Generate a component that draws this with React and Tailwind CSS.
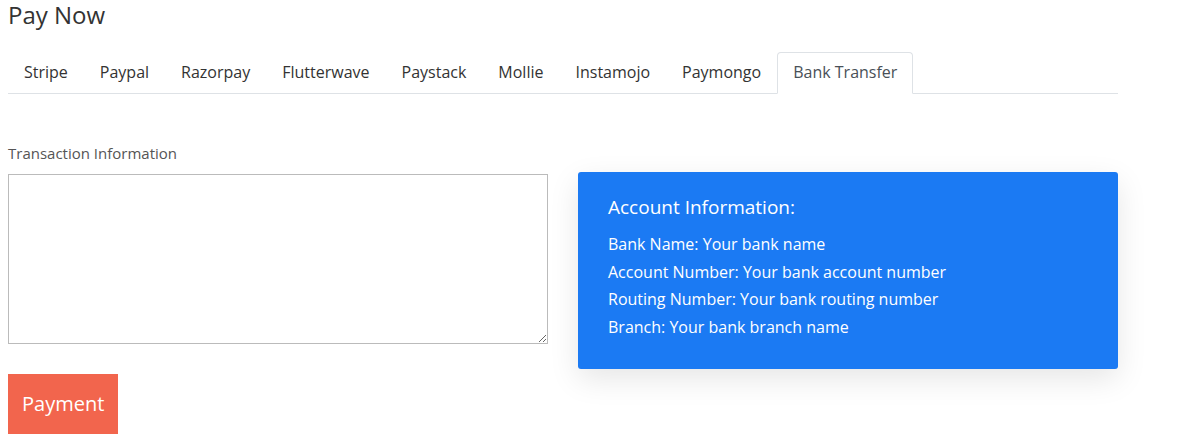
const tabs = ['Stripe', 'Paypal', 'Razorpay', 'Flutterwave', 'Paystack', 'Mollie', 'Instamojo', 'Paymongo', 'Bank Transfer']

export default function App() {
  const active = 'Bank Transfer'
  return (
    <div className="min-h-[444px] bg-white text-[#333]" style={{ fontFamily: "'Open Sans', 'Noto Sans', sans-serif" }}>
      <div className="w-[1110px] ml-[8px]">
        {/* Title */}
        <h2 className="text-[24px] leading-[28px] text-[#333] pt-[1px]">Pay Now</h2>

        {/* Tabs */}
        <ul className="flex mt-[23px] border-b border-[#dee2e6]">
          {tabs.map((t) => (
            <li key={t} className="-mb-px">
              <span
                className={`block px-[15px] h-[42px] leading-[39px] text-[16px] border rounded-t ${
                  t === active
                    ? 'border-[#dee2e6] border-b-white bg-white text-[#495057]'
                    : 'border-transparent text-[#333]'
                }`}
              >
                {t}
              </span>
            </li>
          ))}
        </ul>

        {/* Content */}
        <div className="flex gap-[30px] mt-[50px] items-start">
          <div className="w-[540px]">
            <label className="block text-[15px] leading-[18px] text-[#555] mb-[12px]">Transaction Information</label>
            <textarea className="block w-[540px] h-[170px] border border-[#bbb] outline-none resize-y" />
            <button className="mt-[30px] h-[60px] px-[14px] bg-[#f2654d] text-white text-[20px]">Payment</button>
          </div>
          <div className="w-[540px] mt-[28px] bg-[#1b7af3] rounded-[3px] text-white px-[30px] pt-[24px] pb-[28px] shadow-[0_10px_30px_rgba(0,0,0,0.1)]">
            <h4 className="text-[19px] leading-[22px] mb-[13px]">Account Information:</h4>
            <p className="text-[16px] leading-[27.5px]">Bank Name: Your bank name</p>
            <p className="text-[16px] leading-[27.5px]">Account Number: Your bank account number</p>
            <p className="text-[16px] leading-[27.5px]">Routing Number: Your bank routing number</p>
            <p className="text-[16px] leading-[27.5px]">Branch: Your bank branch name</p>
          </div>
        </div>
      </div>
    </div>
  )
}
